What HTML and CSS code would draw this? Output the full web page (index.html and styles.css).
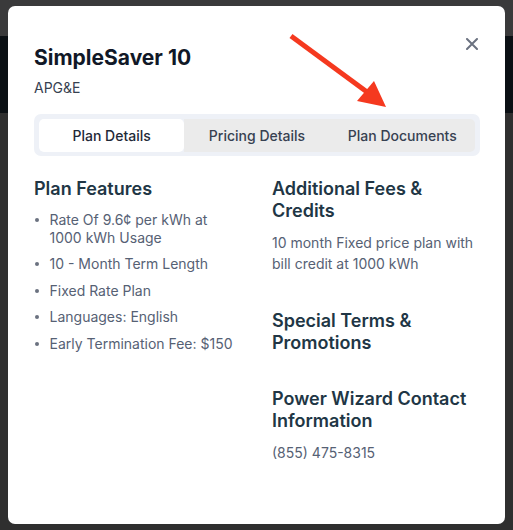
FILE: index.html
```html
<!DOCTYPE html>
<html lang="en">
<head>
<meta charset="utf-8">
<title>SimpleSaver 10</title>
<link rel="stylesheet" href="styles.css">
</head>
<body>
<div class="page">
  <div class="topbar"></div>
  <div class="band"></div>
  <div class="rest"></div>
</div>
<div class="overlay">
  <div class="modal">
    <button class="close" aria-label="Close">
      <svg width="12" height="12" viewBox="0 0 12 12"><path d="M1 1L11 11M11 1L1 11" stroke="#6b7280" stroke-width="2" stroke-linecap="round"/></svg>
    </button>
    <h1 class="title">SimpleSaver 10</h1>
    <div class="provider">APG&amp;E</div>
    <div class="tabs">
      <div class="tab active">Plan Details</div>
      <div class="tab">Pricing Details</div>
      <div class="tab">Plan Documents</div>
    </div>
    <div class="columns">
      <div class="col">
        <section class="section">
          <h2 class="heading">Plan Features</h2>
          <ul class="features">
            <li>Rate Of 9.6¢ per kWh at 1000 kWh Usage</li>
            <li>10 - Month Term Length</li>
            <li>Fixed Rate Plan</li>
            <li>Languages: English</li>
            <li>Early Termination Fee: $150</li>
          </ul>
        </section>
      </div>
      <div class="col right">
        <section class="section">
          <h2 class="heading">Additional Fees &amp; Credits</h2>
          <p class="text">10 month Fixed price plan with bill credit at 1000 kWh</p>
        </section>
        <section class="section">
          <h2 class="heading">Special Terms &amp; Promotions</h2>
        </section>
        <section class="section last">
          <h2 class="heading">Power Wizard Contact Information</h2>
          <p class="text">(855) 475-8315</p>
        </section>
      </div>
    </div>
  </div>
  <svg class="arrow" width="513" height="530" viewBox="0 0 513 530">
    <line x1="291" y1="36" x2="367" y2="92" stroke="#f5391f" stroke-width="5"/>
    <polygon points="357,101 374,81 386,107" fill="#f5391f"/>
  </svg>
</div>
</body>
</html>
```
FILE: styles.css
```css
* { box-sizing: border-box; }
html, body { margin: 0; padding: 0; }
body {
  background: #2f2f2f;
  font-family: Inter, "Noto Sans", sans-serif;
  width: 513px;
  height: 530px;
  overflow: hidden;
}
.page { display: flex; flex-direction: column; height: 530px; }
.topbar { height: 36px; background: #3a3a3b; }
.band { height: 77px; background: #0b1014; }
.rest { flex: 1; background: #2f2f2f; }

.overlay {
  position: fixed;
  inset: 0;
  padding: 6px 8px;
  display: flex;
}
.modal {
  position: relative;
  flex: 1;
  background: #ffffff;
  border-radius: 7px;
  padding: 38px 25px 0 26px;
}
.close {
  position: absolute;
  top: 32px;
  right: 27px;
  width: 12px;
  height: 12px;
  padding: 0;
  border: 0;
  background: none;
  display: flex;
}
.title {
  margin: 0;
  font-size: 21px;
  line-height: 28px;
  font-weight: 700;
  color: #111827;
  letter-spacing: 0;
}
.provider {
  margin-top: 6px;
  font-size: 14px;
  line-height: 20px;
  color: #374151;
}
.tabs {
  margin-top: 16px;
  background: #eef1f7;
  border-radius: 7px;
  padding: 5px 5px 4px;
  display: grid;
  grid-template-columns: 1fr 1fr 1fr;
}
.tab {
  height: 33px;
  line-height: 33px;
  text-align: center;
  font-size: 14px;
  font-weight: 500;
  color: #374151;
  background: #ebebeb;
}
.tab:nth-child(3) { border-radius: 0 5px 5px 0; }
.tab.active {
  background: #ffffff;
  color: #1f2937;
  border-radius: 5px;
}
.columns {
  margin-top: 22px;
  display: grid;
  grid-template-columns: 1fr 1fr;
  column-gap: 30px;
}
.col { display: flex; flex-direction: column; gap: 36px; }
.col .last { margin-top: -2px; }
.heading {
  margin: 0;
  font-size: 18px;
  line-height: 22px;
  font-weight: 600;
  color: #213645;
}
.features {
  margin: 11px 0 0;
  padding: 0;
  list-style: none;
  display: flex;
  flex-direction: column;
  gap: 9px;
}
.features li {
  display: flex;
  align-items: flex-start;
  font-size: 14px;
  line-height: 17.5px;
  color: #566174;
}
.features li::before {
  content: "";
  flex: none;
  width: 4px;
  height: 4px;
  border-radius: 50%;
  background: #6b7280;
  margin: 7px 10.5px 0 1px;
}
.text {
  margin: 11px 0 0;
  font-size: 14px;
  line-height: 20.5px;
  color: #566174;
}
.arrow {
  position: absolute;
  left: 0;
  top: 0;
  pointer-events: none;
}
```
